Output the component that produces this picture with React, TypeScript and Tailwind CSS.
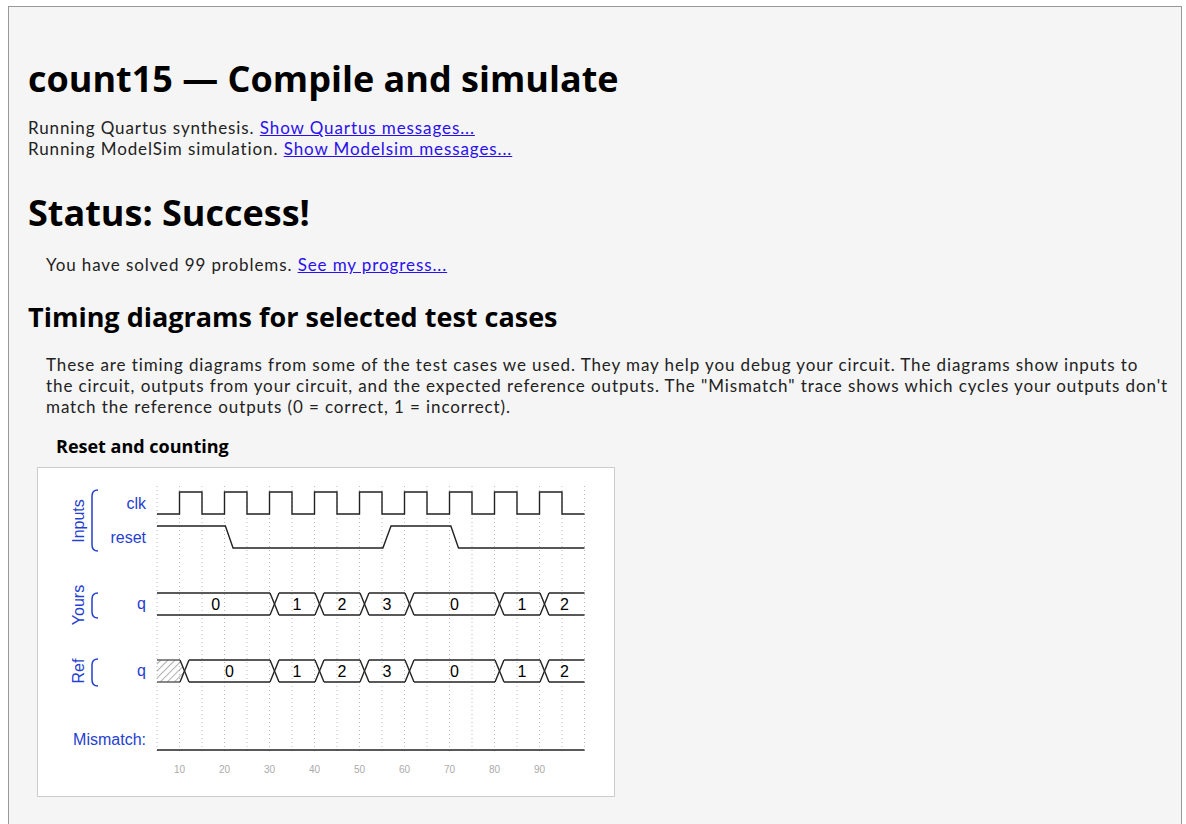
const tx = (t: number) => 157 + (t - 5) * 4.5

const BLUE = '#2540d0'

type Seg = { from: number; to: number; label?: string; hatch?: boolean }

function Bus({ top, bottom, segs }: { top: number; bottom: number; segs: Seg[] }) {
  const mid = (top + bottom) / 2
  const out: React.ReactNode[] = []
  segs.forEach((s, i) => {
    // left edge of this segment (after the crossing) and right edge (before next crossing)
    const x0 = i === 0 ? tx(s.from) : tx(s.from) + 9.5
    const x1 = i === segs.length - 1 ? tx(s.to) : tx(s.to) + 0.5
    if (s.hatch) {
      out.push(
        <polygon
          key={`h${i}`}
          points={`${x0},${top} ${x1},${top} ${x1 + 4.5},${mid} ${x1},${bottom} ${x0},${bottom}`}
          fill="url(#hatch)"
        />
      )
    }
    out.push(<line key={`t${i}`} x1={x0} y1={top} x2={x1} y2={top} stroke={s.hatch ? '#555' : '#222'} strokeWidth={1.4} />)
    out.push(<line key={`b${i}`} x1={x0} y1={bottom} x2={x1} y2={bottom} stroke={s.hatch ? '#555' : '#222'} strokeWidth={1.4} />)
    if (i < segs.length - 1) {
      const a = tx(s.to) + 0.5
      const b = tx(s.to) + 9.5
      out.push(<line key={`x1${i}`} x1={a} y1={top} x2={b} y2={bottom} stroke="#222" strokeWidth={1.4} />)
      out.push(<line key={`x2${i}`} x1={a} y1={bottom} x2={b} y2={top} stroke="#222" strokeWidth={1.4} />)
    }
    if (s.label) {
      const cx = ((i === 0 ? tx(s.from) : tx(s.from) + 5) + (i === segs.length - 1 ? tx(s.to) : tx(s.to) + 5)) / 2
      out.push(
        <text key={`l${i}`} x={cx} y={mid + 5.5} textAnchor="middle" fontSize={16} fill="#000" fontFamily="'Liberation Sans', Arial, sans-serif">
          {s.label}
        </text>
      )
    }
  })
  return <g>{out}</g>
}

function Brace({ x, y1, y2 }: { x: number; y1: number; y2: number }) {
  return (
    <path
      d={`M ${x + 6} ${y1} Q ${x} ${y1} ${x} ${y1 + 6} V ${y2 - 6} Q ${x} ${y2} ${x + 6} ${y2}`}
      fill="none"
      stroke={BLUE}
      strokeWidth={1.5}
    />
  )
}

function TimingDiagram() {
  const grid: number[] = []
  for (let t = 5; t <= 100; t += 5) grid.push(t)

  let clk = `M ${tx(5)} 514`
  for (let k = 10; k <= 90; k += 10) {
    clk += ` H ${tx(k)} V 492 H ${tx(k + 5)} V 514`
  }
  clk += ` H ${tx(100)}`

  const reset = `M ${tx(5)} 526 H ${tx(20.2)} L ${tx(21.9)} 548 H ${tx(55.2)} L ${tx(57)} 526 H ${tx(70.3)} L ${tx(72)} 548 H ${tx(100)}`

  const yours: Seg[] = [
    { from: 5, to: 30, label: '0' },
    { from: 30, to: 40, label: '1' },
    { from: 40, to: 50, label: '2' },
    { from: 50, to: 60, label: '3' },
    { from: 60, to: 80, label: '0' },
    { from: 80, to: 90, label: '1' },
    { from: 90, to: 100, label: '2' },
  ]
  const ref: Seg[] = [{ from: 5, to: 10, hatch: true }, { from: 10, to: 30, label: '0' }, ...yours.slice(1)]

  const label = "'Liberation Sans', Arial, sans-serif"

  return (
    <svg width={576} height={328} className="block">
      <defs>
        <pattern id="hatch" width={5} height={5} patternUnits="userSpaceOnUse" patternTransform="rotate(45)">
          <line x1={0} y1={0} x2={0} y2={5} stroke="#666" strokeWidth={1} />
        </pattern>
      </defs>
      <g transform="translate(-38,-468)" fontFamily={label}>
        {grid.map((t) => (
          <line key={t} x1={tx(t)} y1={486} x2={tx(t)} y2={754} stroke="#bbb" strokeWidth={1} strokeDasharray="1 3" />
        ))}

        {/* left labels */}
        <text transform="rotate(-90 78 521)" x={78} y={521} textAnchor="middle" dominantBaseline="central" fontSize={16} fill={BLUE}>
          Inputs
        </text>
        <Brace x={92} y1={490} y2={551} />
        <text x={146} y={509} textAnchor="end" fontSize={16} fill={BLUE}>clk</text>
        <text x={146} y={543} textAnchor="end" fontSize={16} fill={BLUE}>reset</text>

        <text transform="rotate(-90 78 605)" x={78} y={605} textAnchor="middle" dominantBaseline="central" fontSize={16} fill={BLUE}>
          Yours
        </text>
        <Brace x={92} y1={593} y2={618} />
        <text x={146} y={609} textAnchor="end" fontSize={16} fill={BLUE}>q</text>

        <text transform="rotate(-90 78 671)" x={78} y={671} textAnchor="middle" dominantBaseline="central" fontSize={16} fill={BLUE}>
          Ref
        </text>
        <Brace x={92} y1={659} y2={686} />
        <text x={146} y={676} textAnchor="end" fontSize={16} fill={BLUE}>q</text>

        <text x={146} y={745} textAnchor="end" fontSize={16} fill={BLUE}>Mismatch:</text>

        {/* waves */}
        <path d={clk} fill="none" stroke="#222" strokeWidth={1.4} />
        <path d={reset} fill="none" stroke="#222" strokeWidth={1.4} />
        <Bus top={593} bottom={615} segs={yours} />
        <Bus top={660} bottom={682} segs={ref} />
        <line x1={tx(5)} y1={750} x2={tx(100)} y2={750} stroke="#222" strokeWidth={1.4} />

        {[10, 20, 30, 40, 50, 60, 70, 80, 90].map((t) => (
          <text key={t} x={tx(t)} y={773} textAnchor="middle" fontSize={10} fill="#aaa">
            {t}
          </text>
        ))}
      </g>
    </svg>
  )
}

export default function App() {
  const body = "font-['Lato','Liberation_Sans',sans-serif] text-[17px] leading-[21px] tracking-[0.9px] text-[#222]"
  const head = "font-['Open_Sans','Liberation_Sans',sans-serif] font-bold text-black leading-[1.2]"
  const link = 'text-[#2a10ee] underline'

  return (
    <div className="bg-white pt-[6px] pl-[8px] pr-[4px]">
      <div className="border border-[#999] border-b-0 bg-[#f5f5f5] min-h-[830px] pl-[19px] pr-[20px]">
        <h1 className={`${head} text-[36px] mt-[50px]`}>count15 — Compile and simulate</h1>
        <p className={`${body} mt-[17px]`}>
          Running Quartus synthesis. <a className={link}>Show Quartus messages...</a>
          <br />
          Running ModelSim simulation. <a className={link}>Show Modelsim messages...</a>
        </p>

        <h1 className={`${head} text-[36px] mt-[32px]`}>Status: Success!</h1>
        <p className={`${body} mt-[20px] ml-[18px]`}>
          You have solved 99 problems. <a className={link}>See my progress...</a>
        </p>

        <h2 className={`${head} text-[27px] mt-[26px]`}>Timing diagrams for selected test cases</h2>
        <p className={`${body} mt-[20px] ml-[18px] whitespace-nowrap`}>
          These are timing diagrams from some of the test cases we used. They may help you debug your circuit. The diagrams show inputs to
          <br />
          the circuit, outputs from your circuit, and the expected reference outputs. The "Mismatch" trace shows which cycles your outputs don't
          <br />
          match the reference outputs (0 = correct, 1 = incorrect).
        </p>

        <h3 className={`${head} text-[18px] mt-[19px] ml-[28px]`}>Reset and counting</h3>
        <div className="mt-[10px] ml-[9px] w-[578px] border border-[#ccc] bg-white">
          <TimingDiagram />
        </div>
      </div>
    </div>
  )
}
